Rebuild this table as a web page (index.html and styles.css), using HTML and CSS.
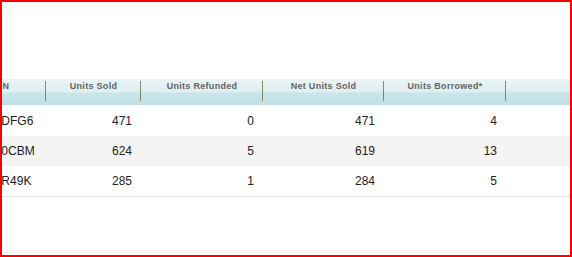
FILE: index.html
```html
<!DOCTYPE html>
<html>
<head>
<meta charset="utf-8">
<link rel="stylesheet" href="styles.css">
</head>
<body>
<div class="frame">
  <table class="grid">
    <colgroup>
      <col class="c1"><col class="c2"><col class="c3"><col class="c4"><col class="c5"><col class="c6">
    </colgroup>
    <thead>
      <tr>
        <th class="sep first">ASIN</th>
        <th class="sep">Units Sold</th>
        <th class="sep">Units Refunded</th>
        <th class="sep">Net Units Sold</th>
        <th class="sep">Units Borrowed*</th>
        <th></th>
      </tr>
    </thead>
    <tbody>
      <tr>
        <td class="asin">B00071DFG6</td><td>471</td><td>0</td><td>471</td><td>4</td><td></td>
      </tr>
      <tr class="alt">
        <td class="asin">B000520CBM</td><td>624</td><td>5</td><td>619</td><td>13</td><td></td>
      </tr>
      <tr>
        <td class="asin">B00083R49K</td><td>285</td><td>1</td><td>284</td><td>5</td><td></td>
      </tr>
    </tbody>
  </table>
</div>
</body>
</html>
```
FILE: styles.css
```css
html, body {
  margin: 0;
  padding: 0;
  background: #fff;
}
.frame {
  width: 572px;
  height: 257px;
  box-sizing: border-box;
  border: 2px solid #f00;
  overflow: hidden;
  padding-top: 77px;
  background: #fff;
}
.grid {
  margin-left: -62px;
  border-collapse: collapse;
  table-layout: fixed;
  width: 632px;
  font-family: "Liberation Sans", Arial, sans-serif;
}
.c1 { width: 106px; }
.c2 { width: 95px; }
.c3 { width: 122px; }
.c4 { width: 121px; }
.c5 { width: 122px; }
.c6 { width: 66px; }
.grid th {
  position: relative;
  height: 26px;
  padding: 2px 0 0 0;
  box-sizing: border-box;
  vertical-align: top;
  font-size: 9px;
  line-height: 11px;
  font-weight: bold;
  color: #646464;
  letter-spacing: 0.3px;
  text-align: center;
  white-space: nowrap;
  background: linear-gradient(to bottom, #eaf4f6 0px, #deeef1 13px, #c9e5ea 14px, #bfdfe5 26px);
}
.grid th.first {
  padding-left: 10px;
}
.grid th.sep::after {
  content: "";
  position: absolute;
  right: 0;
  top: 2px;
  bottom: 4px;
  width: 1px;
  background: #7f8c6e;
  box-shadow: 1px 0 0 rgba(255,255,255,0.6);
}
.grid td {
  font-size: 12px;
  line-height: 14px;
  color: #222;
  text-align: right;
  padding: 0 9px 0 0;
  height: 30px;
  white-space: nowrap;
  overflow: hidden;
}
.grid tbody tr:first-child td { height: 31px; }
.grid tbody tr:last-child td { border-bottom: 1px solid #e2e2e2; }
.grid td.asin {
  text-align: left;
  padding: 0 0 0 20px;
}
.grid tr.alt td { background: #f4f4f4; }
```
